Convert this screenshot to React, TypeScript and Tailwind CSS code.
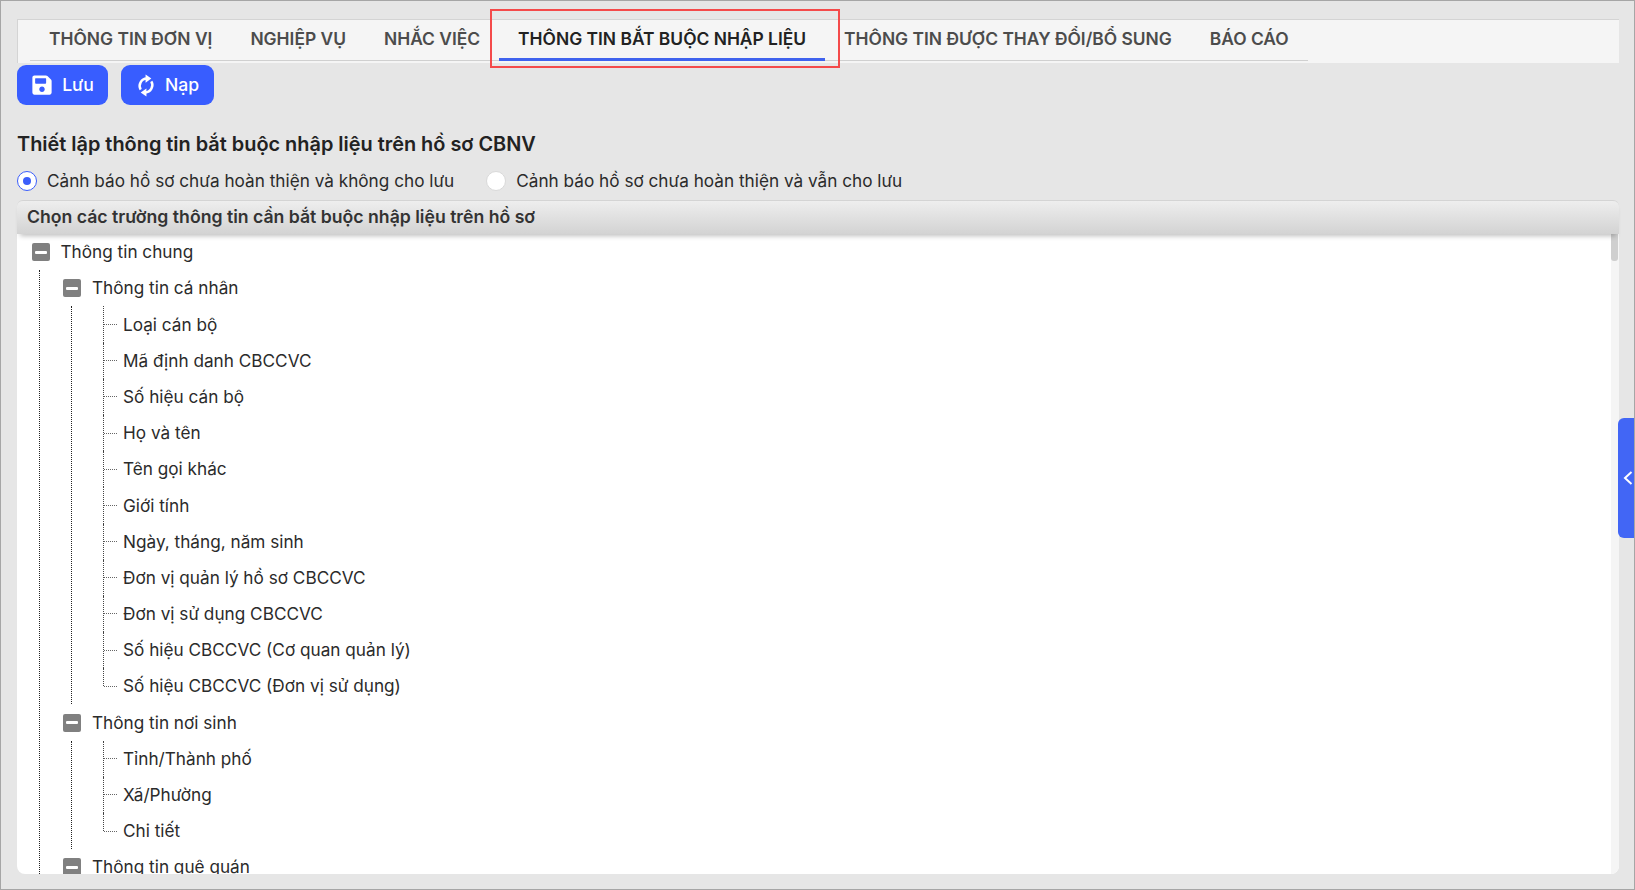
import { FaSave } from 'react-icons/fa'

const tabs = [
  { label: 'THÔNG TIN ĐƠN VỊ' },
  { label: 'NGHIỆP VỤ' },
  { label: 'NHẮC VIỆC' },
  { label: 'THÔNG TIN BẮT BUỘC NHẬP LIỆU', active: true },
  { label: 'THÔNG TIN ĐƯỢC THAY ĐỔI/BỔ SUNG' },
  { label: 'BÁO CÁO' },
]

const groups = [
  {
    title: 'Thông tin cá nhân',
    items: [
      'Loại cán bộ',
      'Mã định danh CBCCVC',
      'Số hiệu cán bộ',
      'Họ và tên',
      'Tên gọi khác',
      'Giới tính',
      'Ngày, tháng, năm sinh',
      'Đơn vị quản lý hồ sơ CBCCVC',
      'Đơn vị sử dụng CBCCVC',
      'Số hiệu CBCCVC (Cơ quan quản lý)',
      'Số hiệu CBCCVC (Đơn vị sử dụng)',
    ],
  },
  { title: 'Thông tin nơi sinh', items: ['Tỉnh/Thành phố', 'Xã/Phường', 'Chi tiết'] },
  { title: 'Thông tin quê quán', items: [] },
]

function MinusBox() {
  return (
    <span className="flex h-[18px] w-[18px] shrink-0 items-center justify-center rounded-[2px] bg-[#808080]">
      <span className="h-[3px] w-[12px] rounded-[1px] bg-white" />
    </span>
  )
}

function SyncIcon() {
  return (
    <svg width="20" height="23" viewBox="0 0 24 28" fill="none" className="shrink-0">
      <path d="M13 5.5A9 9 0 0 0 5.5 19" stroke="white" strokeWidth="3" />
      <path d="M11 22.5A9 9 0 0 0 18.5 9" stroke="white" strokeWidth="3" />
      <path d="M11.5 0.5L18.5 5.5L11.5 10.5Z" fill="white" />
      <path d="M12.5 17.5L5.5 22.5L12.5 27.5Z" fill="white" />
    </svg>
  )
}

function Leaf({ label, last }: { label: string; last: boolean }) {
  return (
    <li className="flex h-[36.2px] items-center">
      <span className={`w-0 self-start border-l border-dotted border-[#444] ${last ? 'h-1/2' : 'h-full'}`} />
      <span className="w-[13px] border-t border-dotted border-[#666]" />
      <span className="ml-[6px] whitespace-nowrap">{label}</span>
    </li>
  )
}

function Radio({ label, checked }: { label: string; checked?: boolean }) {
  return (
    <label className="flex items-center gap-[10px]">
      <span
        className={`flex h-[20px] w-[20px] items-center justify-center rounded-full bg-white border ${
          checked ? 'border-[#3b5efb]' : 'border-[#d9d9d9]'
        }`}
      >
        {checked && <span className="h-[8px] w-[8px] rounded-full bg-[#3b5efb]" />}
      </span>
      <span>{label}</span>
    </label>
  )
}

export default function App() {
  return (
    <div className="relative flex h-[890px] w-[1635px] flex-col overflow-hidden border border-[#a6a6a6] bg-[#e6e6e6] pl-4 pr-[15px] font-['Inter',sans-serif] text-[#2b2b2b]">
      {/* Tabs */}
      <div className="mt-[18px] flex h-[44px] shrink-0 border-t border-l border-[#d4d4d4] bg-[#f5f5f5] pl-[12px]">
        {tabs.map((tab) => (
          <div
            key={tab.label}
            className={`flex h-[41px] items-center whitespace-nowrap px-[19px] text-[17.4px] font-semibold ${
              tab.active
                ? 'border-b-[3px] border-[#3f62ee] text-[#222]'
                : 'border-b border-[#d0d0d0] pb-[2px] text-[#4c4c4c]'
            }`}
          >
            {tab.label}
          </div>
        ))}
      </div>

      {/* Toolbar */}
      <div className="mt-[2px] flex shrink-0 gap-[13px]">
        <button className="flex h-[40px] w-[91px] items-center justify-center gap-[9px] rounded-[9px] bg-[#385dff] text-[17.6px] font-medium text-white">
          <FaSave className="h-[22px] w-[22px] shrink-0" />
          Lưu
        </button>
        <button className="flex h-[40px] w-[93px] items-center justify-center gap-[9px] rounded-[9px] bg-[#385dff] text-[17.6px] font-medium text-white">
          <SyncIcon />
          Nạp
        </button>
      </div>

      <h1 className="mt-[24px] shrink-0 text-[19.9px] leading-[30px] font-semibold text-[#222]">
        Thiết lập thông tin bắt buộc nhập liệu trên hồ sơ CBNV
      </h1>

      <div className="mt-[12px] flex h-[20px] shrink-0 items-center gap-[32px] text-[17.2px]">
        <Radio label="Cảnh báo hồ sơ chưa hoàn thiện và không cho lưu" checked />
        <Radio label="Cảnh báo hồ sơ chưa hoàn thiện và vẫn cho lưu" />
      </div>

      {/* Panel */}
      <div className="mt-[9px] flex min-h-0 flex-1 flex-col">
        <div className="relative z-10 flex h-[34px] shrink-0 items-center rounded-t-[6px] border-t border-[#d4d4d4] bg-gradient-to-b from-[#eeeeee] to-[#d3d3d3] pl-[10px] text-[17.65px] font-semibold text-[#333] shadow-[0_5px_5px_-3px_rgba(0,0,0,0.25)]">
          Chọn các trường thông tin cần bắt buộc nhập liệu trên hồ sơ
        </div>
        <div className="mb-[15px] flex min-h-0 flex-1 overflow-hidden rounded-b-[8px] bg-white">
          <div className="min-w-0 flex-1 overflow-hidden pl-[15px] text-[17.2px]">
            <div className="flex h-[36.2px] items-center gap-[10.5px]">
              <MinusBox />
              <span>Thông tin chung</span>
            </div>
            <div className="ml-[7px] border-l border-dotted border-[#222] pl-[23px]">
              {groups.map((group) => (
                <div key={group.title}>
                  <div className="flex h-[36.2px] items-center gap-[11px]">
                    <MinusBox />
                    <span>{group.title}</span>
                  </div>
                  {group.items.length > 0 && (
                    <div className="ml-[8px] border-l border-dotted border-[#222] pl-[31px]">
                      <ul>
                        {group.items.map((item, i) => (
                          <Leaf key={item} label={item} last={i === group.items.length - 1} />
                        ))}
                      </ul>
                    </div>
                  )}
                </div>
              ))}
              <div className="h-[36.2px]" />
            </div>
          </div>
          <div className="w-[8px] shrink-0 bg-[#f5f5f5]">
            <div className="h-[27px] w-[7px] rounded-b-[3px] bg-[#cfcfcf]" />
          </div>
        </div>
      </div>

      {/* Highlight box on the active tab */}
      <div className="absolute top-[8px] left-[489px] h-[59px] w-[350px] border-2 border-[#f44a4a]" />

      {/* Side handle */}
      <div className="absolute top-[417px] right-0 flex h-[120px] w-[16px] items-center justify-end rounded-l-[6px] bg-[#4266f5] pr-[1px]">
        <svg width="10" height="14" viewBox="0 0 10 14" fill="none" stroke="white" strokeWidth="2">
          <path d="M8.5 1 L2 7 L8.5 13" />
        </svg>
      </div>
    </div>
  )
}
